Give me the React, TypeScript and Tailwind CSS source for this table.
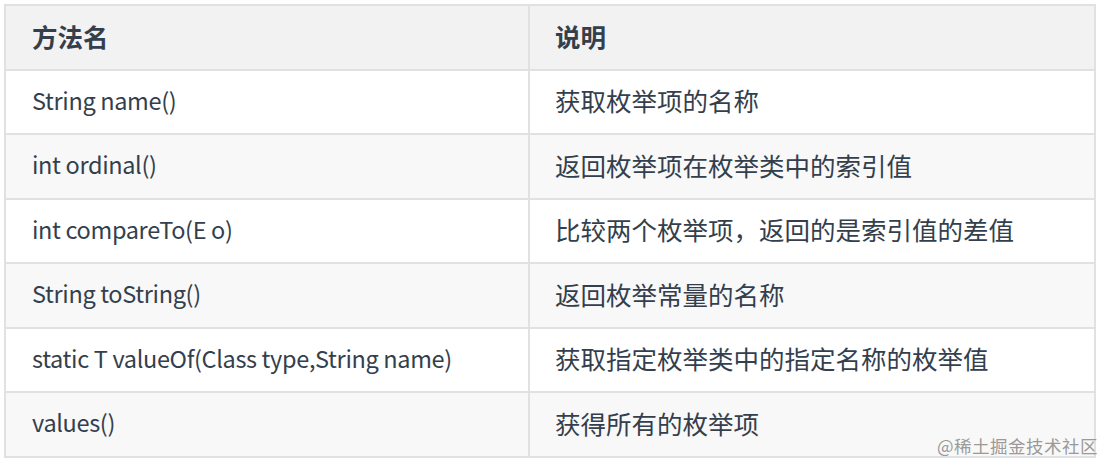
const rows: [string, string][] = [
  ["String name()", "获取枚举项的名称"],
  ["int ordinal()", "返回枚举项在枚举类中的索引值"],
  ["int compareTo(E o)", "比较两个枚举项，返回的是索引值的差值"],
  ["String toString()", "返回枚举常量的名称"],
  ["static T valueOf(Class type,String name)", "获取指定枚举类中的指定名称的枚举值"],
  ["values()", "获得所有的枚举项"],
];

export default function App() {
  return (
    <div className="relative h-[472px] w-[1114px] overflow-hidden bg-white pl-1 pt-1 font-['Noto_Sans_CJK_SC','Noto_Sans',sans-serif] text-[25.5px] text-[#343f4d]">
      <table className="w-[1092px] border-collapse border-2 border-[#e1e1e1]">
        <thead>
          <tr className="h-[64.5px] bg-[#f2f2f2]">
            <th className="w-[524px] border-2 border-[#e1e1e1] pb-[2px] pl-[26px] text-left font-bold">方法名</th>
            <th className="border-2 border-[#e1e1e1] pb-[2px] pl-[25px] text-left font-bold">说明</th>
          </tr>
        </thead>
        <tbody>
          {rows.map(([name, desc], i) => (
            <tr key={name} className={i % 2 === 1 ? "h-[64.5px] bg-[#f8f8f8]" : "h-[64.5px] bg-white"}>
              <td className="border-2 border-[#e1e1e1] pb-[3px] pl-[26px] text-[23.5px] tracking-[-0.35px]">{name}</td>
              <td className="border-2 border-[#e1e1e1] pb-[3px] pl-[25px]">{desc}</td>
            </tr>
          ))}
        </tbody>
      </table>
      <div className="absolute left-[937px] top-[435px] text-[17.5px] leading-[22px] tracking-[0.5px] text-[#9a9a9a]">
        @稀土掘金技术社区
      </div>
    </div>
  );
}
